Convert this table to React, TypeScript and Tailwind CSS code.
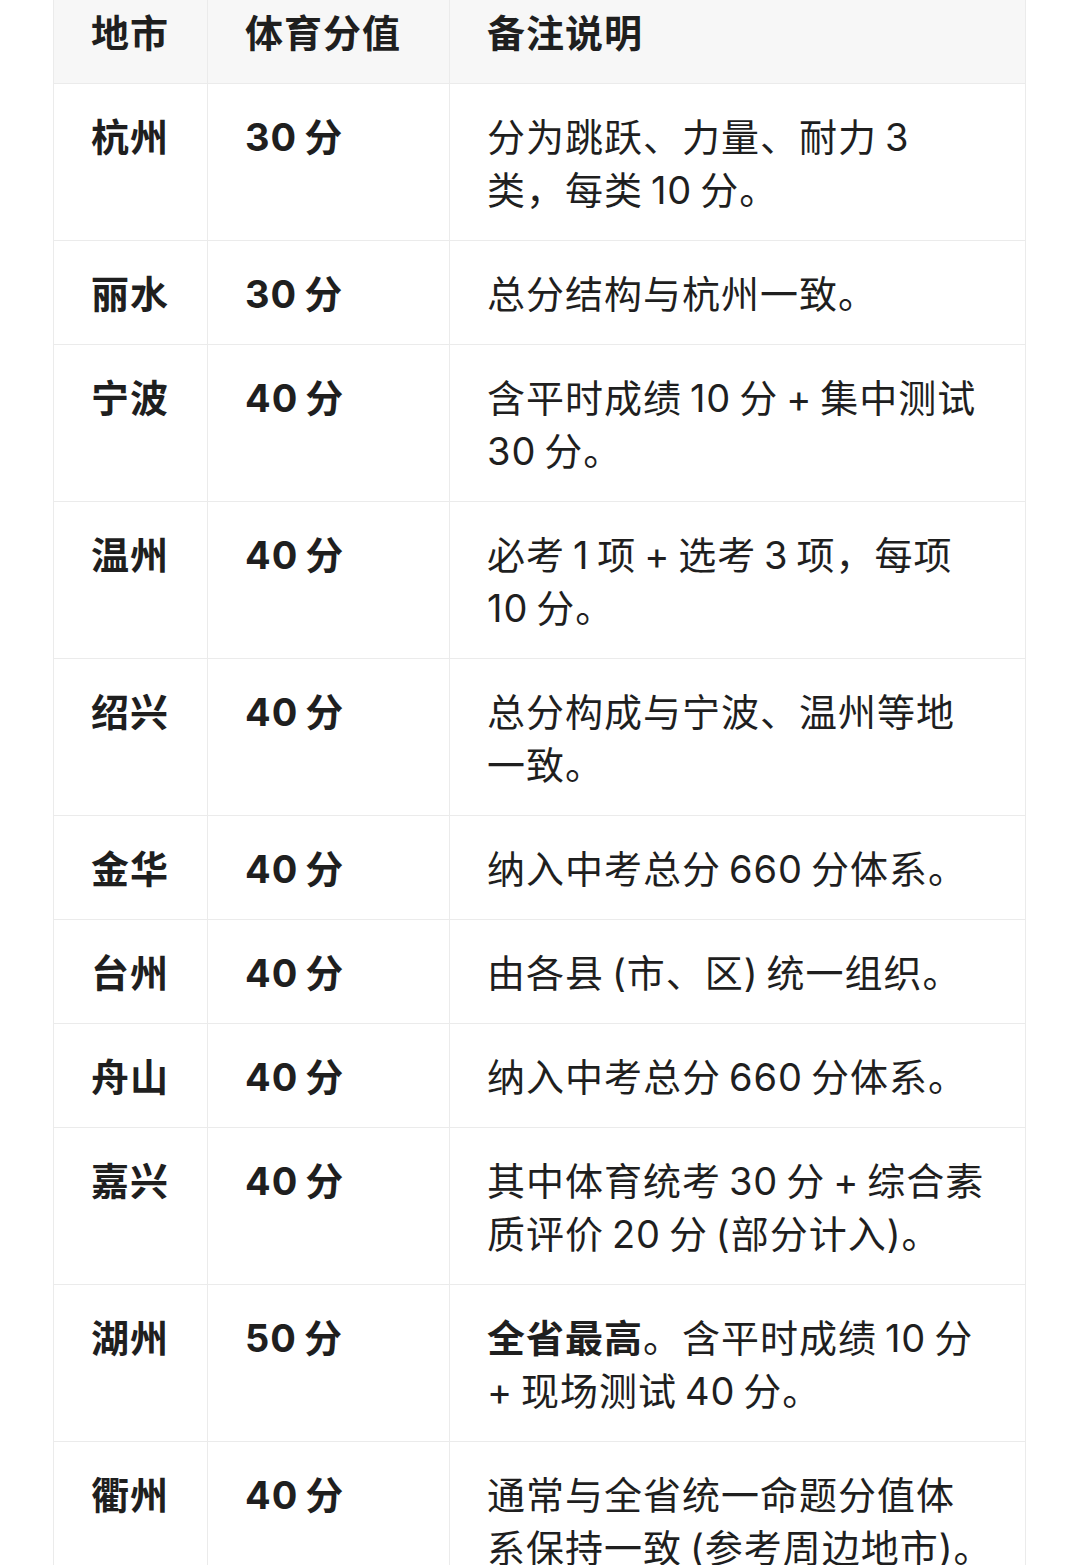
import React from 'react';

type Row = {
  city: string;
  score: string;
  note: React.ReactNode[];
};

// 数字与汉字之间只留窄空隙
const t = (s: string) => s.replace(/ /g, '\u2009');

// 浙江各地市中考体育分值，备注按截图中的换行分行
const rows: Row[] = [
  { city: '杭州', score: '30 分', note: ['分为跳跃、力量、耐力 3', '类，每类 10 分。'] },
  { city: '丽水', score: '30 分', note: ['总分结构与杭州一致。'] },
  { city: '宁波', score: '40 分', note: ['含平时成绩 10 分 + 集中测试', '30 分。'] },
  { city: '温州', score: '40 分', note: ['必考 1 项 + 选考 3 项，每项', '10 分。'] },
  { city: '绍兴', score: '40 分', note: ['总分构成与宁波、温州等地', '一致。'] },
  { city: '金华', score: '40 分', note: ['纳入中考总分 660 分体系。'] },
  { city: '台州', score: '40 分', note: ['由各县 (市、区) 统一组织。'] },
  { city: '舟山', score: '40 分', note: ['纳入中考总分 660 分体系。'] },
  { city: '嘉兴', score: '40 分', note: ['其中体育统考 30 分 + 综合素', '质评价 20 分 (部分计入)。'] },
  {
    city: '湖州',
    score: '50 分',
    note: [
      <>
        <span className="font-bold">全省最高</span>
        {t('。含平时成绩 10 分')}
      </>,
      '+ 现场测试 40 分。',
    ],
  },
  { city: '衢州', score: '40 分', note: ['通常与全省统一命题分值体', '系保持一致 (参考周边地市)。'] },
];

const cell = 'border border-[#ebebeb] px-[37px] pt-[27px] pb-[23px] align-top';

export default function App() {
  return (
    <div
      className="w-[1080px] h-[1565px] overflow-hidden bg-white text-[#1f1f1f]"
      style={{ fontFamily: 'Inter, "Noto Sans CJK SC", "Noto Sans", sans-serif' }}
    >
      <table className="-mt-[21px] ml-[53px] w-[973px] table-fixed border-collapse text-[38px] leading-[53px] tracking-[1px]">
        <colgroup>
          <col className="w-[154px]" />
          <col className="w-[242px]" />
          <col />
        </colgroup>
        <thead>
          <tr className="bg-[#f7f7f7]">
            <th className={`${cell} text-left font-bold`}>地市</th>
            <th className={`${cell} text-left font-bold`}>体育分值</th>
            <th className={`${cell} text-left font-bold`}>备注说明</th>
          </tr>
        </thead>
        <tbody>
          {rows.map((r) => (
            <tr key={r.city}>
              <td className={`${cell} font-bold`}>{r.city}</td>
              <td className={`${cell} font-bold`}>{t(r.score)}</td>
              <td className={cell}>
                {r.note.map((line, i) => (
                  <div key={i} className="whitespace-nowrap">
                    {typeof line === 'string' ? t(line) : line}
                  </div>
                ))}
              </td>
            </tr>
          ))}
        </tbody>
      </table>
    </div>
  );
}
